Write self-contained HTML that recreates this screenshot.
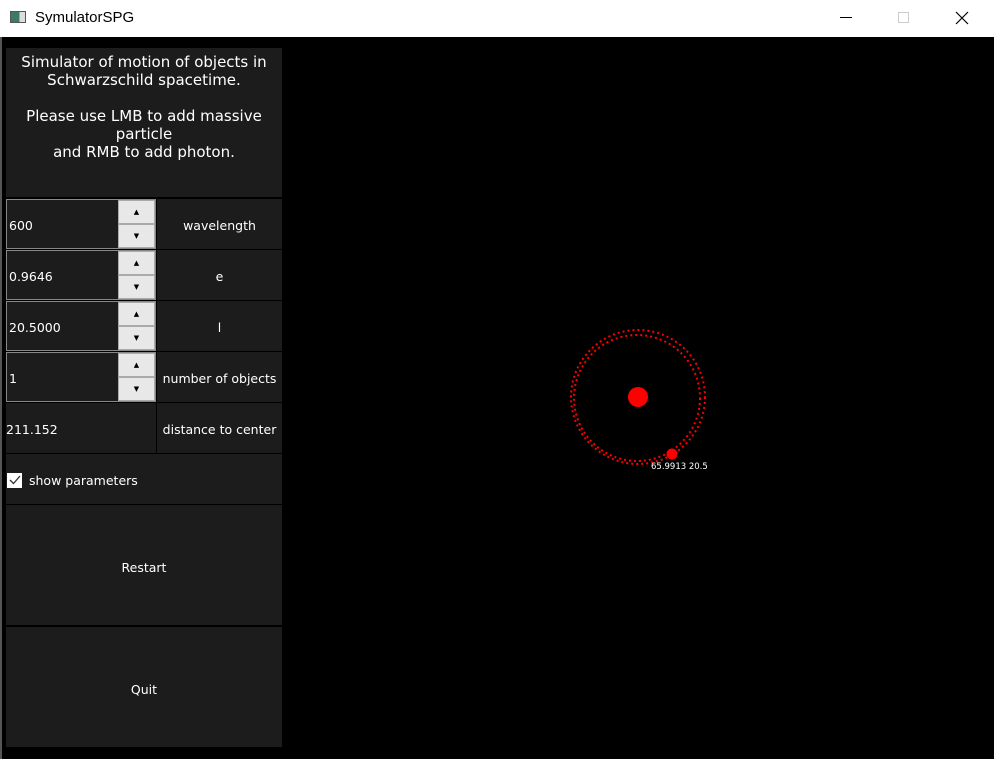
<!DOCTYPE html>
<html><head><style>
*{margin:0;padding:0;box-sizing:border-box}
body{width:994px;height:759px;background:#000;font-family:"DejaVu Sans","Liberation Sans",sans-serif;position:relative;overflow:hidden;color:#fff}
.abs{position:absolute}
.title{left:0;top:0;width:994px;height:37px;background:#fff;color:#000;font-size:14px}
.cell{position:absolute;background:#1c1c1c;display:flex;align-items:center;justify-content:center;font-size:12.5px}
.in{position:absolute;background:#1c1c1c;border:1px solid #888;font-size:12.5px;display:flex;align-items:center;padding-left:2px}
.btn{position:absolute;background:#e8e8e8;border:1px solid #aaa;display:flex;align-items:center;justify-content:center;color:#000;font-size:7px}
</style></head><body>
<div class="abs title">
 <div class="abs" style="left:10px;top:11px;width:16px;height:12px;border:1px solid #555;background:linear-gradient(90deg,#3a7a6a 60%,#ddd 60%)"></div>
 <div class="abs" style="left:35px;top:9px;font-family:'Liberation Sans',sans-serif;font-size:15px">SymulatorSPG</div>
 <div class="abs" style="left:840px;top:17px;width:12px;height:1px;background:#000"></div>
 <div class="abs" style="left:898px;top:12px;width:11px;height:11px;border:1px solid #ccc"></div>
 <svg class="abs" style="left:955px;top:11px" width="14" height="14"><path d="M1 1L13 13M13 1L1 13" stroke="#000" stroke-width="1.2"/></svg>
</div>
<div class="abs" style="left:0;top:37px;width:2px;height:722px;background:#555"></div>
<div class="cell" style="left:6px;top:48px;width:276px;height:149px;align-items:flex-start;text-align:center;font-size:15px;line-height:18px;padding-top:5px">Simulator of motion of objects in<br>Schwarzschild spacetime.<br><br>Please use LMB to add massive<br>particle<br>and RMB to add photon.</div>

<div class="in" style="left:6px;top:199px;width:150px;height:50px;padding-top:2px">600</div>
<div class="btn" style="left:118px;top:200px;width:37px;height:24px">▲</div><div class="btn" style="left:118px;top:224px;width:37px;height:24px">▼</div>
<div class="cell" style="left:157px;top:199px;width:125px;height:50px;padding-top:2px">wavelength</div>

<div class="in" style="left:6px;top:250px;width:150px;height:50px;padding-top:2px">0.9646</div>
<div class="btn" style="left:118px;top:251px;width:37px;height:24px">▲</div><div class="btn" style="left:118px;top:275px;width:37px;height:24px">▼</div>
<div class="cell" style="left:157px;top:250px;width:125px;height:50px;padding-top:2px">e</div>

<div class="in" style="left:6px;top:301px;width:150px;height:50px;padding-top:2px">20.5000</div>
<div class="btn" style="left:118px;top:302px;width:37px;height:24px">▲</div><div class="btn" style="left:118px;top:326px;width:37px;height:24px">▼</div>
<div class="cell" style="left:157px;top:301px;width:125px;height:50px;padding-top:2px">l</div>

<div class="in" style="left:6px;top:352px;width:150px;height:50px;padding-top:2px">1</div>
<div class="btn" style="left:118px;top:353px;width:37px;height:24px">▲</div><div class="btn" style="left:118px;top:377px;width:37px;height:24px">▼</div>
<div class="cell" style="left:157px;top:352px;width:125px;height:50px;padding-top:2px">number of objects</div>

<div class="cell" style="left:6px;top:403px;width:150px;height:50px;justify-content:flex-start;padding-top:2px">211.152</div>
<div class="cell" style="left:157px;top:403px;width:125px;height:50px;padding-top:2px">distance to center</div>

<div class="cell" style="left:6px;top:454px;width:276px;height:50px;justify-content:flex-start;padding-top:2px">
 <div style="width:15px;height:15px;background:#fff;margin-left:1px;margin-right:7px;display:flex;align-items:center;justify-content:center"><svg width="12" height="12"><path d="M1 6L4.5 9.5L11 2" stroke="#333" stroke-width="1.3" fill="none"/></svg></div>show parameters</div>

<div class="cell" style="left:6px;top:505px;width:276px;height:120px;padding-top:4px">Restart</div>
<div class="cell" style="left:6px;top:627px;width:276px;height:120px;padding-top:4px">Quit</div>

<svg class="abs" style="left:0;top:0" width="994" height="759">
 <g fill="none" stroke="#f00" stroke-width="2" stroke-dasharray="2 3">
  <circle cx="638" cy="397" r="67"/>
  <circle cx="637" cy="398" r="63"/>
 </g>
 <circle cx="638" cy="397" r="10" fill="#f00"/>
 <circle cx="672" cy="454" r="5.5" fill="#f00"/>
 <text x="651" y="469" fill="#fff" font-size="8.5" font-family="DejaVu Sans,sans-serif">65.9913 20.5</text>
</svg>
</body></html>
